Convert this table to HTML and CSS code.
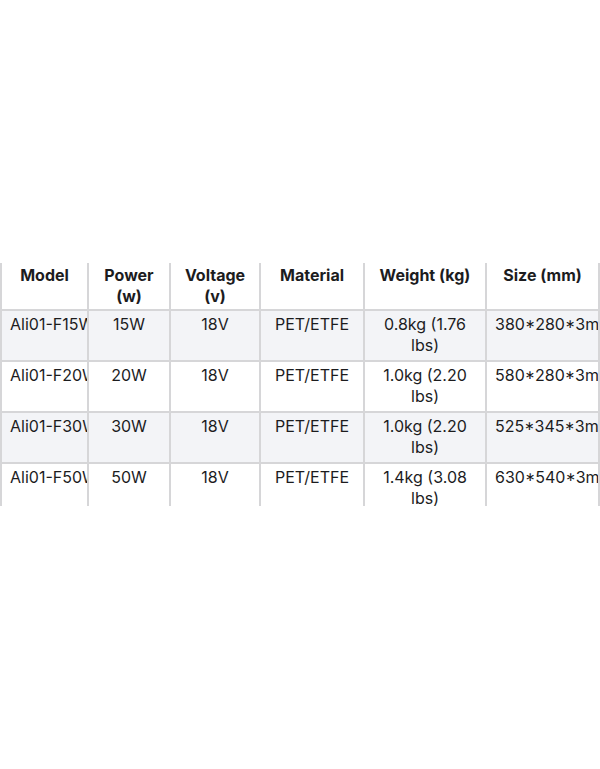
FILE: index.html
```html
<!DOCTYPE html>
<html>
<head>
<meta charset="utf-8">
<link rel="stylesheet" href="styles.css">
</head>
<body>
<div class="frame">
<table class="specs">
<colgroup>
<col class="c1"><col class="c2"><col class="c3"><col class="c4"><col class="c5"><col class="c6">
</colgroup>
<thead>
<tr><th>Model</th><th>Power (w)</th><th>Voltage (v)</th><th>Material</th><th>Weight (kg)</th><th>Size (mm)</th></tr>
</thead>
<tbody>
<tr class="alt"><td class="nw">Ali01-F15W</td><td>15W</td><td>18V</td><td>PET/ETFE</td><td>0.8kg (1.76 lbs)</td><td class="nw">380*280*3mm</td></tr>
<tr><td class="nw">Ali01-F20W</td><td>20W</td><td>18V</td><td>PET/ETFE</td><td>1.0kg (2.20 lbs)</td><td class="nw">580*280*3mm</td></tr>
<tr class="alt"><td class="nw">Ali01-F30W</td><td>30W</td><td>18V</td><td>PET/ETFE</td><td>1.0kg (2.20 lbs)</td><td class="nw">525*345*3mm</td></tr>
<tr><td class="nw">Ali01-F50W</td><td>50W</td><td>18V</td><td>PET/ETFE</td><td>1.4kg (3.08 lbs)</td><td class="nw">630*540*3mm</td></tr>
</tbody>
</table>
</div>
</body>
</html>
```
FILE: styles.css
```css
html, body {
  margin: 0;
  padding: 0;
  background: #ffffff;
}
body {
  font-family: Inter, "Liberation Sans", sans-serif;
  color: #1c1c1e;
  font-size: 16px;
  line-height: 21px;
}
.frame {
  margin-top: 263px;
  height: 243px;
  overflow: hidden;
}
.specs {
  width: 598px;
  table-layout: fixed;
  border-collapse: collapse;
}
.c1 { width: 87px; }
.c2 { width: 82px; }
.c3 { width: 90px; }
.c4 { width: 104px; }
.c5 { width: 122px; }
.c6 { width: 113px; }
.specs th,
.specs td {
  border: 2px solid #d6d6d8;
  text-align: center;
  vertical-align: top;
  overflow: hidden;
}
.specs th {
  font-weight: 700;
  padding: 2px 8px 2px;
  border-top: none;
}
.specs td {
  font-weight: 400;
  padding: 3px 8px 4px;
}
.specs tr.alt td {
  background: #f3f4f7;
}
.specs .nw {
  white-space: nowrap;
}
```
